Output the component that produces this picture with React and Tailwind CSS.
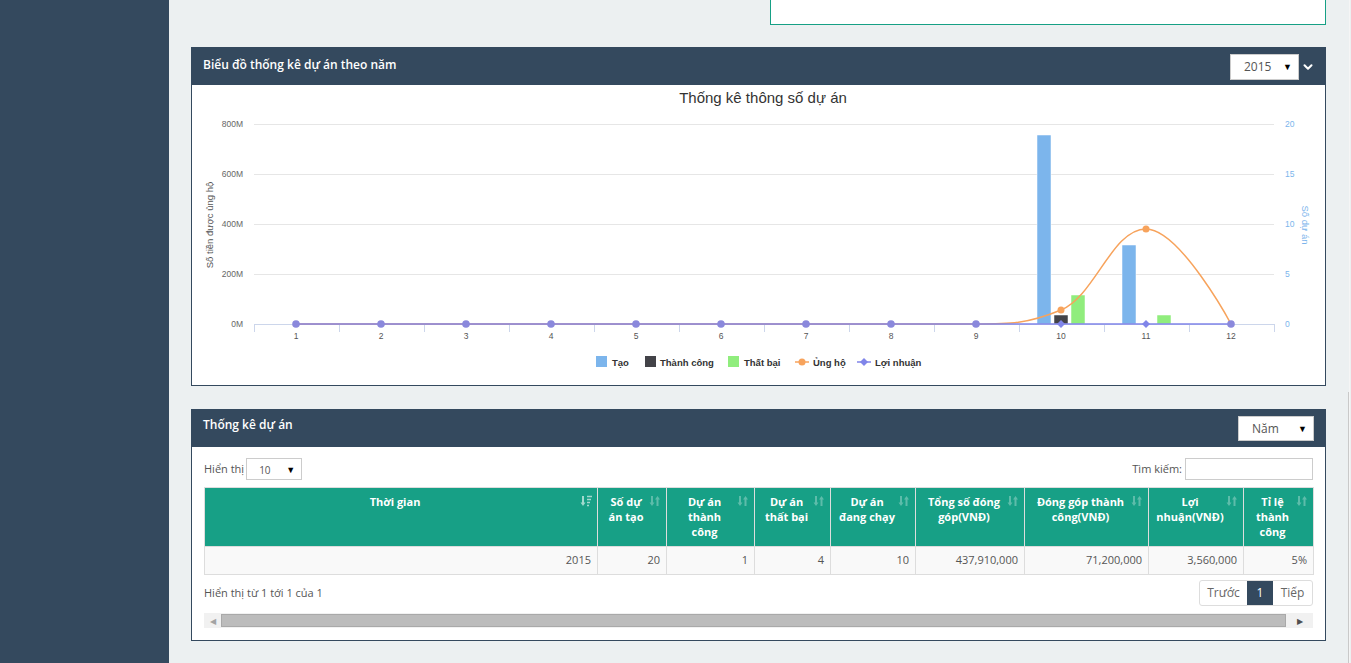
import { ChevronDown } from "lucide-react";

const months = [1, 2, 3, 4, 5, 6, 7, 8, 9, 10, 11, 12];
const px = (i) => 104 + 85 * i;
const base = 239;

// Highcharts-like spline path
function splinePath(pts) {
    const s = 1.5, d = 2.5;
    let path = `M ${pts[0][0]} ${pts[0][1]}`;
    const conts = pts.map((p, i) => {
        const last = pts[i - 1], next = pts[i + 1];
        if (!last || !next) return { l: p, r: p };
        let lx = (s * p[0] + last[0]) / d, ly = (s * p[1] + last[1]) / d;
        let rx = (s * p[0] + next[0]) / d, ry = (s * p[1] + next[1]) / d;
        const c = ((ry - ly) * (rx - p[0])) / (rx - lx) + p[1] - ry;
        ly += c; ry += c;
        if (ly > last[1] && ly > p[1]) { ly = Math.max(last[1], p[1]); ry = 2 * p[1] - ly; }
        else if (ly < last[1] && ly < p[1]) { ly = Math.min(last[1], p[1]); ry = 2 * p[1] - ly; }
        if (ry > next[1] && ry > p[1]) { ry = Math.max(next[1], p[1]); ly = 2 * p[1] - ry; }
        else if (ry < next[1] && ry < p[1]) { ry = Math.min(next[1], p[1]); ly = 2 * p[1] - ry; }
        return { l: [lx, ly], r: [rx, ry] };
    });
    for (let i = 1; i < pts.length; i++) {
        const a = conts[i - 1].r, b = conts[i].l, p = pts[i];
        path += ` C ${a[0]} ${a[1]} ${b[0]} ${b[1]} ${p[0]} ${p[1]}`;
    }
    return path;
}

function Chart() {
    const orange = months.map((m, i) => [px(i), i === 9 ? 225 : i === 10 ? 144 : base]);
    const grid = [39, 89, 139, 189, 239];
    const leftLabels = ["800M", "600M", "400M", "200M", "0M"];
    const rightLabels = ["20", "15", "10", "5", "0"];
    return (
        <svg width="1133" height="300" className="block font-['Liberation_Sans',Arial,sans-serif]">
            <text x="571" y="18" textAnchor="middle" fontSize="15" fill="#333">Thống kê thông số dự án</text>
            {grid.map((y, i) => (
                <g key={y}>
                    {i < 4 && <line x1="62" x2="1082" y1={y + 0.5} y2={y + 0.5} stroke="#e6e6e6" />}
                    <text x="51" y={y + 3} textAnchor="end" fontSize="8.5" fill="#666">{leftLabels[i]}</text>
                    <text x="1093" y={y + 3} fontSize="8.5" fill="#7cb5ec">{rightLabels[i]}</text>
                </g>
            ))}
            <text transform="translate(21 140) rotate(-90)" textAnchor="middle" fontSize="9.5" fill="#555">Số tiền được ủng hộ</text>
            <text transform="translate(1110 140) rotate(90)" textAnchor="middle" fontSize="9.5" fill="#7cb5ec">Số dự án</text>
            <line x1="62" x2="1082" y1="239.5" y2="239.5" stroke="#ccd6eb" />
            {Array.from({ length: 13 }).map((_, i) => (
                <line key={i} x1={62.5 + 85 * i} x2={62.5 + 85 * i} y1="239" y2="247" stroke="#ccd6eb" />
            ))}
            {months.map((m, i) => (
                <text key={m} x={px(i)} y="254" textAnchor="middle" fontSize="8.5" fill="#555">{m}</text>
            ))}
            {/* bars */}
            <rect x="845" y="50" width="14" height="189" fill="#7cb5ec" stroke="#fff" strokeWidth="0.5" />
            <rect x="862" y="230" width="14" height="9" fill="#434348" stroke="#fff" strokeWidth="0.5" />
            <rect x="879" y="210" width="14" height="29" fill="#90ed7d" stroke="#fff" strokeWidth="0.5" />
            <rect x="930" y="160" width="14" height="79" fill="#7cb5ec" stroke="#fff" strokeWidth="0.5" />
            <rect x="965" y="230" width="14" height="9" fill="#90ed7d" stroke="#fff" strokeWidth="0.5" />
            {/* lines */}
            <path d={splinePath(orange)} fill="none" stroke="#f7a35c" strokeWidth="1.5" />
            <line x1={px(0)} x2={px(11)} y1="239" y2="239" stroke="#8085e9" strokeWidth="1.5" />
            {orange.map(([x, y], i) => (i === 9 || i === 10) && <circle key={i} cx={x} cy={y} r="3.5" fill="#f7a35c" />)}
            {months.map((m, i) => {
                const x = px(i);
                if (i === 9 || i === 10) return <path key={m} d={`M ${x} 235 L ${x + 4} 239 L ${x} 243 L ${x - 4} 239 Z`} fill="#8085e9" />;
                return <circle key={m} cx={x} cy="239" r="3.8" fill="#8a88dc" />;
            })}
            {/* legend */}
            <g fontSize="9.5" fontWeight="bold" fill="#333">
                <rect x="404" y="271" width="11" height="11" fill="#7cb5ec" />
                <text x="420" y="281">Tạo</text>
                <rect x="453" y="271" width="11" height="11" fill="#434348" />
                <text x="468" y="281">Thành công</text>
                <rect x="536" y="271" width="11" height="11" fill="#90ed7d" />
                <text x="552" y="281">Thất bại</text>
                <line x1="603" x2="617" y1="277" y2="277" stroke="#f7a35c" strokeWidth="1.5" />
                <circle cx="610" cy="277" r="3.5" fill="#f7a35c" />
                <text x="621" y="281">Ủng hộ</text>
                <line x1="665" x2="679" y1="277" y2="277" stroke="#8085e9" strokeWidth="1.5" />
                <path d="M 672 273 L 676 277 L 672 281 L 668 277 Z" fill="#8085e9" />
                <text x="683" y="281">Lợi nhuận</text>
            </g>
        </svg>
    );
}

function SortIcon({ active }) {
    if (active) {
        return (
            <svg width="12" height="12" viewBox="0 0 12 12" className="opacity-60">
                <path d="M3 1 V9" stroke="#fff" strokeWidth="2" />
                <path d="M0.5 7.5 L3 11 L5.5 7.5 Z" fill="#fff" />
                <path d="M7 1.5 H12 M7 4.5 H11 M7 7.5 H10 M7 10.5 H9" stroke="#fff" strokeWidth="1.6" />
            </svg>
        );
    }
    return (
        <svg width="12" height="12" viewBox="0 0 12 12" className="opacity-30">
            <path d="M3 1 V9" stroke="#fff" strokeWidth="2" />
            <path d="M0.5 7.5 L3 11 L5.5 7.5 Z" fill="#fff" />
            <path d="M8.5 3 V11" stroke="#fff" strokeWidth="2" />
            <path d="M6 4.5 L8.5 1 L11 4.5 Z" fill="#fff" />
        </svg>
    );
}

const cols = [
    { w: 393, h: ["Thời gian"], v: "2015", active: true },
    { w: 69, h: ["Số dự", "án tạo"], v: "20" },
    { w: 88, h: ["Dự án", "thành", "công"], v: "1" },
    { w: 76, h: ["Dự án", "thất bại"], v: "4" },
    { w: 85, h: ["Dự án", "đang chạy"], v: "10" },
    { w: 109, h: ["Tổng số đóng", "góp(VNĐ)"], v: "437,910,000" },
    { w: 124, h: ["Đóng góp thành", "công(VNĐ)"], v: "71,200,000" },
    { w: 95, h: ["Lợi", "nhuận(VNĐ)"], v: "3,560,000" },
    { w: 70, h: ["Tỉ lệ", "thành", "công"], v: "5%" },
];

function Select({ value, className }) {
    return (
        <div className={"flex items-center justify-between bg-white border border-[#ccc] text-[#555] " + className}>
            <span>{value}</span>
            <span className="text-[9px] text-black">▼</span>
        </div>
    );
}

export default function App() {
    return (
        <div className="flex h-[663px] overflow-hidden font-['Open_Sans',sans-serif] text-[#555]">
            <div className="w-[169px] shrink-0 bg-[#34495e]"></div>
            <div className="flex-1 flex bg-[#ecf0f1]">
                <div className="ml-[22px] w-[1135px]">
                    <div className="ml-[579px] w-[556px] h-[25px] bg-white border border-t-0 border-[#16a085]"></div>

                    {/* chart panel */}
                    <div className="mt-[22px]">
                        <div className="h-[38px] bg-[#34495e] flex justify-between items-start pl-[12px] pr-[11px]">
                            <h2 className="mt-[10px] text-white text-[12px] font-semibold leading-[16px]">Biểu đồ thống kê dự án theo năm</h2>
                            <div className="flex items-center mt-[7px]">
                                <Select value="2015" className="w-[69px] h-[26px] pl-[13px] pr-[6px] text-[12px]" />
                                <ChevronDown className="ml-[2px] text-white" size={14} strokeWidth={3.5} />
                            </div>
                        </div>
                        <div className="h-[301px] bg-white border border-t-0 border-[#34495e]">
                            <Chart />
                        </div>
                    </div>

                    {/* table panel */}
                    <div className="mt-[23px]">
                        <div className="h-[38px] bg-[#34495e] flex justify-between items-start pl-[12px] pr-[12px]">
                            <h2 className="mt-[8px] text-white text-[12px] font-semibold leading-[16px]">Thống kê dự án</h2>
                            <Select value="Năm" className="mt-[7px] w-[76px] h-[25px] pl-[13px] pr-[6px] text-[12px]" />
                        </div>
                        <div className="bg-white border border-t-0 border-[#34495e] px-[12px] pt-[11px] pb-[12px]">
                            <div className="flex justify-between items-center h-[22px] text-[11px]">
                                <div className="flex items-center gap-[2px]">
                                    <span>Hiển thị</span>
                                    <Select value="10" className="w-[56px] h-[22px] pl-[12px] pr-[6px] text-[10px] pt-[2px]" />
                                </div>
                                <div className="flex items-center gap-[3px]">
                                    <span>Tìm kiếm:</span>
                                    <div className="w-[128px] h-[22px] border border-[#ccc] bg-white"></div>
                                </div>
                            </div>
                            <table className="mt-[7px] table-fixed border-collapse w-[1109px] text-[11px]">
                                <colgroup>
                                    {cols.map((c, i) => <col key={i} style={{ width: c.w }} />)}
                                </colgroup>
                                <thead>
                                    <tr className="h-[59px] bg-[#17a086]">
                                        {cols.map((c, i) => (
                                            <th key={i} className="relative align-top border border-[#ddd] pt-[6px] pl-[6px] pr-[18px] text-white font-bold leading-[15px] text-center">
                                                {c.h.map((l, j) => <div key={j}>{l}</div>)}
                                                <span className="absolute right-[5px] top-[7px]"><SortIcon active={c.active} /></span>
                                            </th>
                                        ))}
                                    </tr>
                                </thead>
                                <tbody>
                                    <tr className="h-[28px] bg-[#f9f9f9]">
                                        {cols.map((c, i) => (
                                            <td key={i} className="border border-[#ddd] px-[6px] text-right">{c.v}</td>
                                        ))}
                                    </tr>
                                </tbody>
                            </table>
                            <div className="mt-[5px] flex justify-between items-center text-[11px]">
                                <span>Hiển thị từ 1 tới 1 của 1</span>
                                <div className="flex h-[26px] border border-[#ddd] rounded-[3px] text-[12px] text-[#666] overflow-hidden">
                                    <span className="w-[47px] flex items-center justify-center">Trước</span>
                                    <span className="w-[26px] flex items-center justify-center bg-[#34495e] text-white">1</span>
                                    <span className="w-[39px] flex items-center justify-center">Tiếp</span>
                                </div>
                            </div>
                            <div className="mt-[7px] h-[15px] bg-[#f1f1f1] flex items-center">
                                <span className="w-[17px] text-center text-[8px] text-[#a3a3a3]">◀</span>
                                <div className="flex-1 h-[13px] bg-[#bcbcbc] border border-[#a9a9a9]"></div>
                                <span className="w-[27px] text-center text-[8px] text-[#505050]">▶</span>
                            </div>
                        </div>
                    </div>
                </div>
                <div className="ml-[22px] w-[1px] mt-[392px] bg-[#c9c9c9]"></div>
                <div className="w-[1px] bg-[#f5f5f5]"></div>
            </div>
        </div>
    );
}
